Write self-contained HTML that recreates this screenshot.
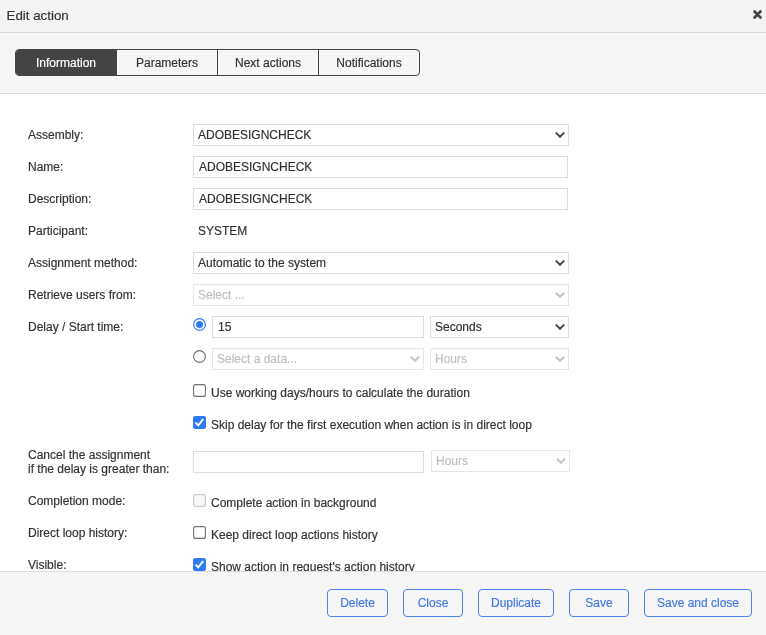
<!DOCTYPE html>
<html lang="en">
<head>
<meta charset="utf-8">
<title>Edit action</title>
<style>
*{box-sizing:border-box;margin:0;padding:0}
html,body{width:766px;height:635px;overflow:hidden;background:#fff}
body{will-change:transform;-webkit-text-stroke:0.18px;font-family:"Liberation Sans",sans-serif;font-size:12px;color:#333;position:relative}
.abs{position:absolute}
#header{left:0;top:0;width:766px;height:33px;background:#f4f4f4;border-bottom:1px solid #d8d8d8}
#title{left:6.5px;top:7px;font-size:13.33px;line-height:17px;color:#333;white-space:nowrap}
#closex{left:753px;top:10px;width:9px;height:9px}
#tabbar{left:0;top:33px;width:766px;height:61px;background:#f6f6f6;border-bottom:1px solid #dcdcdc}
#tabs{left:15px;top:49px;height:27px;display:flex;border:1px solid #444;border-radius:4px;overflow:hidden;background:#f6f6f6}
.tab{height:25px;line-height:27px;width:100px;text-align:center;font-size:12px;color:#333;border-left:1px solid #444;white-space:nowrap}
.tab:first-child{border-left:0}
.tab+.tab{width:101px}
.tab.active{background:#444;color:#fff}
#content{left:0;top:94px;width:766px;height:477px;overflow:hidden;background:#fff}
.lbl{left:28px;font-size:12px;line-height:14px;color:#333;white-space:nowrap}
.inp{left:193px;height:22px;border:1px solid #ddd;background:#fff;font-size:12px;line-height:20px;color:#333;padding-left:5px;white-space:nowrap;overflow:hidden}
.sel{padding-left:4px;border-radius:0}
.dis{color:#bfbfbf;border-color:#e6e6e6}
.chev{position:absolute;right:3px;top:6.4px;width:10px;height:8px}
.txt{font-size:12px;line-height:14px;color:#333;white-space:nowrap}
#footer{left:0;top:571px;width:766px;height:64px;background:#f6f6f6;border-top:1px solid #dcdcdc}
.btn{top:589px;height:28px;border:1px solid #4e84e8;border-radius:4px;background:#f6f6f6;color:#4279e2;font-size:12px;line-height:26px;text-align:center;white-space:nowrap}
</style>
</head>
<body>
<div id="header" class="abs"></div>
<div id="title" class="abs">Edit action</div>
<svg id="closex" class="abs" viewBox="0 0 9 9"><path d="M1.5 1.5 L7.5 7.5 M7.5 1.5 L1.5 7.5" stroke="#404040" stroke-width="2.6" stroke-linecap="round" fill="none"/></svg>
<div id="tabbar" class="abs"></div>
<div id="tabs" class="abs">
  <div class="tab active">Information</div>
  <div class="tab">Parameters</div>
  <div class="tab">Next actions</div>
  <div class="tab">Notifications</div>
</div>

<div id="content" class="abs">
  <div class="abs lbl" style="top:34px">Assembly:</div>
  <div class="abs inp sel" style="top:30px;width:376px">ADOBESIGNCHECK<svg class="chev" viewBox="0 0 10 8"><path d="M0.8 1.6 L5 5.8 L9.2 1.6" stroke="#444" stroke-width="2" fill="none" stroke-linejoin="miter"/></svg></div>

  <div class="abs lbl" style="top:66px">Name:</div>
  <div class="abs inp" style="top:62px;width:375px">ADOBESIGNCHECK</div>

  <div class="abs lbl" style="top:98px">Description:</div>
  <div class="abs inp" style="top:94px;width:375px">ADOBESIGNCHECK</div>

  <div class="abs lbl" style="top:130px">Participant:</div>
  <div class="abs txt" style="left:198px;top:130px">SYSTEM</div>

  <div class="abs lbl" style="top:162px">Assignment method:</div>
  <div class="abs inp sel" style="top:158px;width:376px">Automatic to the system<svg class="chev" viewBox="0 0 10 8"><path d="M0.8 1.6 L5 5.8 L9.2 1.6" stroke="#444" stroke-width="2" fill="none" stroke-linejoin="miter"/></svg></div>

  <div class="abs lbl" style="top:194px">Retrieve users from:</div>
  <div class="abs inp sel dis" style="top:190px;width:376px">Select ...<svg class="chev" viewBox="0 0 10 8"><path d="M0.8 1.6 L5 5.8 L9.2 1.6" stroke="#c4c4c4" stroke-width="2" fill="none" stroke-linejoin="miter"/></svg></div>

  <div class="abs lbl" style="top:226px">Delay / Start time:</div>
  <svg class="abs" style="left:193px;top:224px;width:13px;height:13px" viewBox="0 0 13 13"><circle cx="6.5" cy="6.5" r="5.9" fill="#fff" stroke="#2f7af6" stroke-width="1.15"/><circle cx="6.5" cy="6.5" r="3.5" fill="#2f7af6"/></svg>
  <div class="abs inp" style="left:212px;top:222px;width:212px">15</div>
  <div class="abs inp sel" style="left:430px;top:222px;width:139px">Seconds<svg class="chev" viewBox="0 0 10 8"><path d="M0.8 1.6 L5 5.8 L9.2 1.6" stroke="#444" stroke-width="2" fill="none" stroke-linejoin="miter"/></svg></div>

  <svg class="abs" style="left:193px;top:256px;width:13px;height:13px" viewBox="0 0 13 13"><circle cx="6.5" cy="6.5" r="5.9" fill="#fff" stroke="#707070" stroke-width="1.1"/></svg>
  <div class="abs inp sel dis" style="left:212px;top:254px;width:212px">Select a data...<svg class="chev" viewBox="0 0 10 8"><path d="M0.8 1.6 L5 5.8 L9.2 1.6" stroke="#c4c4c4" stroke-width="2" fill="none" stroke-linejoin="miter"/></svg></div>
  <div class="abs inp sel dis" style="left:430px;top:254px;width:139px">Hours<svg class="chev" viewBox="0 0 10 8"><path d="M0.8 1.6 L5 5.8 L9.2 1.6" stroke="#c4c4c4" stroke-width="2" fill="none" stroke-linejoin="miter"/></svg></div>

  <svg class="abs" style="left:193px;top:290px;width:13px;height:13px" viewBox="0 0 13 13"><rect x="0.6" y="0.6" width="11.8" height="11.8" rx="2" fill="#fff" stroke="#727272" stroke-width="1.1"/></svg>
  <div class="abs txt" style="left:211px;top:292px">Use working days/hours to calculate the duration</div>

  <svg class="abs" style="left:193px;top:322px;width:13px;height:13px" viewBox="0 0 13 13"><rect x="0" y="0" width="13" height="13" rx="2.2" fill="#2f7af6"/><path d="M2.5 6.6 L5.3 9.3 L10.2 3" stroke="#fff" stroke-width="2" fill="none" stroke-linejoin="miter"/></svg>
  <div class="abs txt" style="left:211px;top:324px">Skip delay for the first execution when action is in direct loop</div>

  <div class="abs lbl" style="top:354px">Cancel the assignment<br>if the delay is greater than:</div>
  <div class="abs inp" style="top:357px;width:231px"></div>
  <div class="abs inp sel dis" style="left:431px;top:356px;width:139px">Hours<svg class="chev" viewBox="0 0 10 8"><path d="M0.8 1.6 L5 5.8 L9.2 1.6" stroke="#c4c4c4" stroke-width="2" fill="none" stroke-linejoin="miter"/></svg></div>

  <div class="abs lbl" style="top:400px">Completion mode:</div>
  <svg class="abs" style="left:193px;top:400px;width:13px;height:13px" viewBox="0 0 13 13"><rect x="0.6" y="0.6" width="11.8" height="11.8" rx="2" fill="#f8f8f8" stroke="#cacaca" stroke-width="1.2"/></svg>
  <div class="abs txt" style="left:211px;top:402px">Complete action in background</div>

  <div class="abs lbl" style="top:432px">Direct loop history:</div>
  <svg class="abs" style="left:193px;top:432px;width:13px;height:13px" viewBox="0 0 13 13"><rect x="0.6" y="0.6" width="11.8" height="11.8" rx="2" fill="#fff" stroke="#727272" stroke-width="1.1"/></svg>
  <div class="abs txt" style="left:211px;top:434px">Keep direct loop actions history</div>

  <div class="abs lbl" style="top:464px">Visible:</div>
  <svg class="abs" style="left:193px;top:464px;width:13px;height:13px" viewBox="0 0 13 13"><rect x="0" y="0" width="13" height="13" rx="2.2" fill="#2f7af6"/><path d="M2.5 6.6 L5.3 9.3 L10.2 3" stroke="#fff" stroke-width="2" fill="none" stroke-linejoin="miter"/></svg>
  <div class="abs txt" style="left:211px;top:466px">Show action in request's action history</div>
</div>

<div id="footer" class="abs"></div>
<div class="abs btn" style="left:327px;width:61px">Delete</div>
<div class="abs btn" style="left:403px;width:60px">Close</div>
<div class="abs btn" style="left:478px;width:76px">Duplicate</div>
<div class="abs btn" style="left:569px;width:60px">Save</div>
<div class="abs btn" style="left:644px;width:108px">Save and close</div>
</body>
</html>
